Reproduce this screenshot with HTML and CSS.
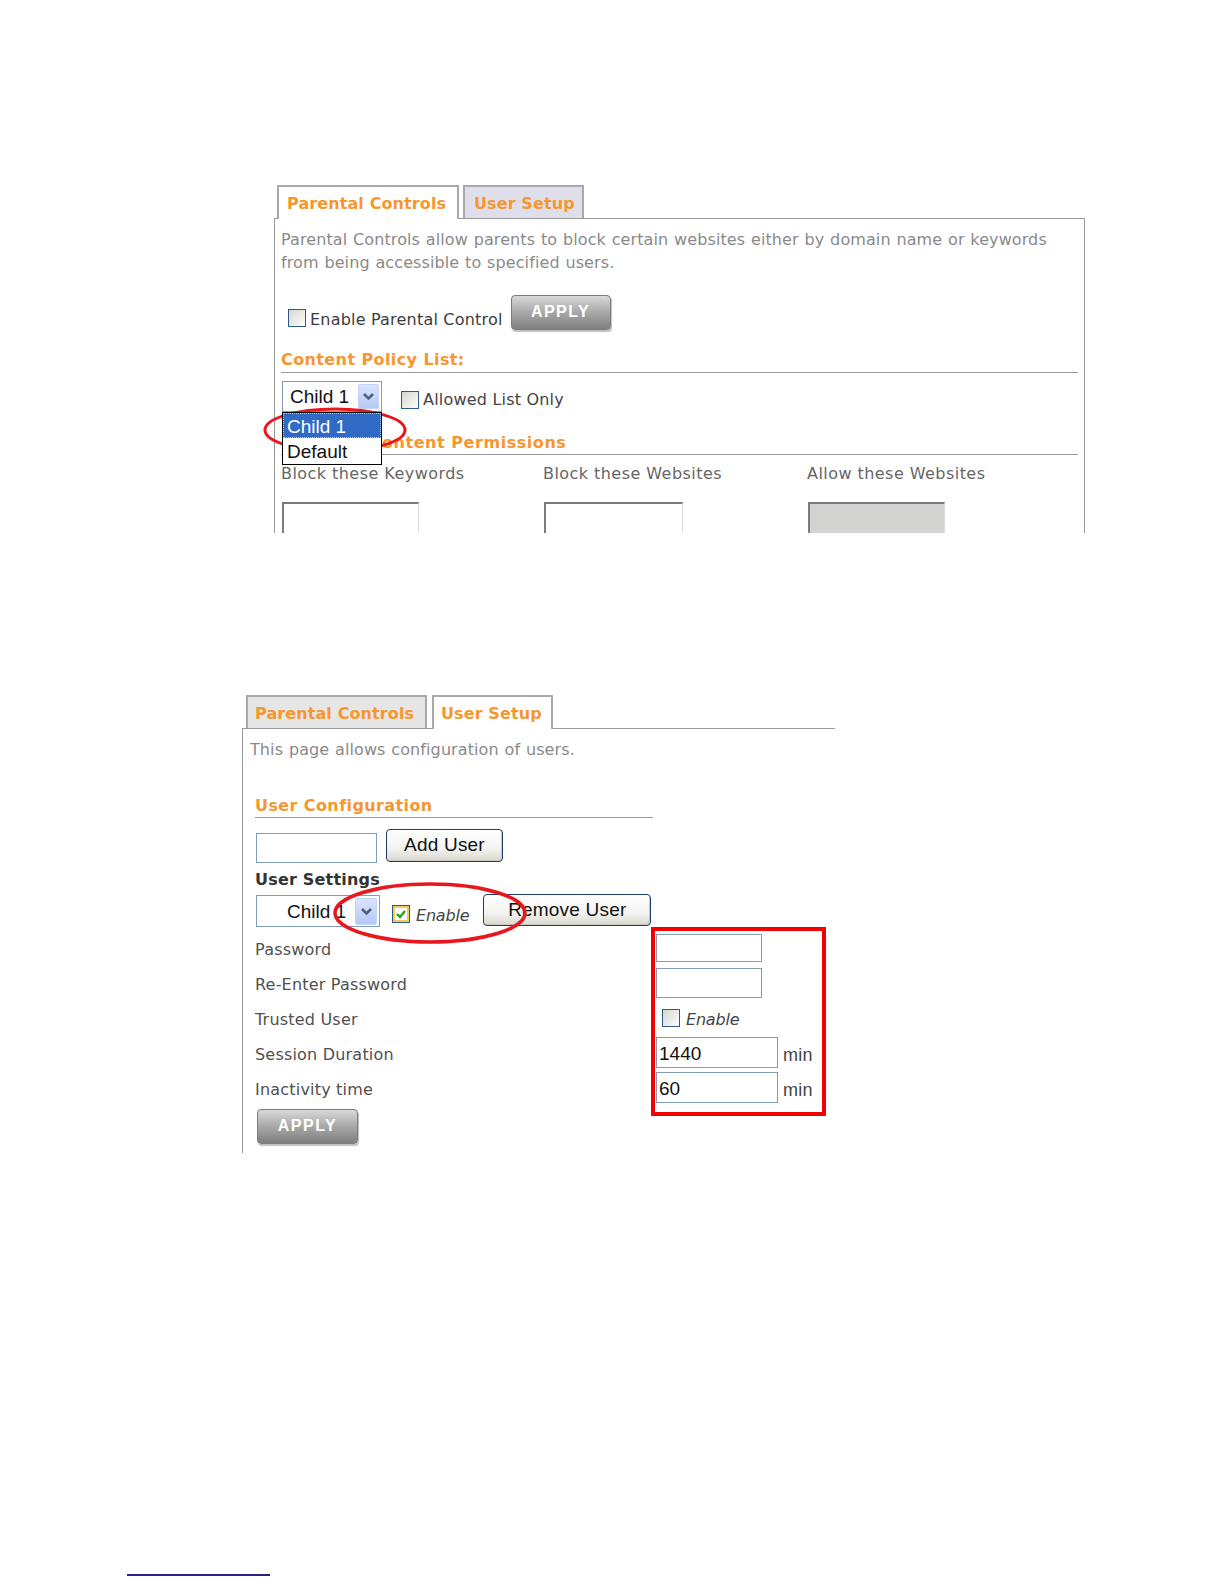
FILE: index.html
```html
<!doctype html>
<html>
<head>
<meta charset="UTF-8">
<title>Parental Controls</title>
<link rel="stylesheet" href="styles.css">
</head>
<body>

<!-- screen 1: parental controls, policy drop-down opened -->
<div class="shot shot-pc">
  <div class="tabs">
    <div class="tab tab-pc active">Parental Controls</div>
    <div class="tab tab-us">User Setup</div>
  </div>
  <div class="panel panel-pc">
    <p class="desc">Parental Controls allow parents to block certain websites either by domain name or keywords<br>from being accessible to specified users.</p>

    <div class="enable-row">
      <span class="check"></span>
      <span class="check-label">Enable Parental Control</span>
      <span class="apply">APPLY</span>
    </div>

    <div class="section-head">Content Policy List:</div>

    <div class="policy-row">
      <div class="select select-pc">
        <span class="select-text">Child 1</span>
        <span class="drop"><svg width="13" height="9" viewBox="0 0 13 9"><polyline points="2,2 6.5,6.5 11,2" fill="none" stroke="#4d6185" stroke-width="2.6"/></svg></span>
        <div class="select-list">
          <div class="opt opt-on">Child 1</div>
          <div class="opt opt-low">Default</div>
        </div>
      </div>
      <span class="check allowed-check"></span>
      <span class="check-label allowed-label">Allowed List Only</span>
    </div>

    <div class="section-head perm-head">Selected Content Permissions</div>

    <div class="cols">
      <div class="col-label">Block these Keywords</div>
      <div class="col-label">Block these Websites</div>
      <div class="col-label">Allow these Websites</div>
      <div class="inset"></div>
      <div class="inset inset-2"></div>
      <div class="inset off"></div>
    </div>
  </div>

  <svg class="mark mark-1" width="148" height="52" viewBox="0 0 148 52"><ellipse cx="73" cy="24" rx="70" ry="21" fill="none" stroke="#e8161d" stroke-width="3"/></svg>
</div>

<!-- screen 2: user setup -->
<div class="shot shot-us">
  <div class="tabs tabs-us">
    <div class="tab tab-pc2">Parental Controls</div>
    <div class="tab tab-us2 active">User Setup</div>
  </div>
  <div class="panel panel-us">
    <p class="desc desc-us">This page allows configuration of users.</p>

    <div class="form">
      <div class="section-head head-short">User Configuration</div>

      <div class="add-row">
        <span class="field field-name"></span>
        <span class="xp-btn add-btn">Add User</span>
      </div>

      <div class="settings-title">User Settings</div>

      <div class="user-row">
        <div class="select select-us">
          <span class="select-text">Child 1</span>
          <span class="drop"><svg width="13" height="9" viewBox="0 0 13 9"><polyline points="2,2 6.5,6.5 11,2" fill="none" stroke="#4d6185" stroke-width="2.6"/></svg></span>
        </div>
        <span class="check checked"><svg width="14" height="14" viewBox="0 0 14 14"><polyline points="3,7 6,10 11,4" fill="none" stroke="#21a121" stroke-width="2.4"/></svg></span>
        <span class="em-label">Enable</span>
        <span class="xp-btn remove-btn">Remove User</span>
      </div>

      <div class="grid">
        <span class="row-label">Password</span>
        <span class="field field-pw"></span>
        <span class="row-label">Re-Enter Password</span>
        <span class="field field-pw2"></span>
        <span class="row-label">Trusted User</span>
        <span class="trust"><span class="check"></span><span class="em-label">Enable</span></span>
        <span class="row-label">Session Duration</span>
        <span class="with-unit"><span class="field field-num">1440</span><span class="unit">min</span></span>
        <span class="row-label">Inactivity time</span>
        <span class="with-unit"><span class="field field-num">60</span><span class="unit">min</span></span>
      </div>

      <span class="apply apply-us">APPLY</span>
    </div>
  </div>

  <svg class="mark mark-2" width="200" height="66" viewBox="0 0 200 66"><ellipse cx="99" cy="32" rx="95" ry="29" fill="none" stroke="#e8161d" stroke-width="3.5"/></svg>
  <div class="mark mark-box"></div>
</div>

<div class="footnote-rule"></div>

</body>
</html>
```

FILE: styles.css
```css
body { margin: 0; background: #fff; font-family: "DejaVu Sans", sans-serif; font-size: 16px; color: #555; letter-spacing: 0.2px; }

.shot { position: relative; }
.shot-pc { margin: 185px 0 0 274px; width: 811px; }
.shot-us { margin: 162px 0 0 242px; width: 594px; }

/* tabs */
.tabs { display: flex; gap: 4px; height: 33px; padding-left: 3px; align-items: flex-start; }
.tabs-us { padding-left: 4px; gap: 5px; }
.tab { box-sizing: border-box; height: 33px; border: 2px solid #a9a9a9; border-bottom: 0; line-height: 33px; font-weight: bold; color: #f7962f; white-space: nowrap; letter-spacing: 0.1px; }
.tab.active { position: relative; height: 34px; background: #fff; }
.tab-pc { width: 182px; padding-left: 8px; }
.tab-us { width: 121px; padding-left: 9px; background: #dfdfeb; }
.tab-pc2 { width: 181px; padding-left: 7px; background: #e6e6e6; }
.tab-us2 { width: 121px; padding-left: 7px; }

/* panels */
.panel { box-sizing: border-box; border-top: 1px solid #999; border-left: 1px solid #999; }
.panel-pc { height: 315px; border-right: 1px solid #999; padding: 0 6px; overflow: hidden; }
.panel-us { height: 425px; width: 593px; padding-left: 7px; }

.desc { margin: 0; padding-top: 9px; line-height: 23px; color: #8a8a8a; white-space: nowrap; letter-spacing: 0.1px; word-spacing: 0.6px; }
.desc-us { padding-top: 11px; line-height: 20px; }

.section-head { line-height: 20px; padding-bottom: 2px; border-bottom: 1px solid #999; color: #f7962f; font-weight: bold; margin-top: 20px; white-space: nowrap; letter-spacing: 0.4px; }

/* checkboxes */
.check { box-sizing: border-box; display: inline-block; width: 18px; height: 18px; border: 1px solid #2c5a8a; background: linear-gradient(135deg, #d8d8d2, #fbfbf9); flex: none; }
.check.checked { background: #fff; box-shadow: inset 0 0 0 2px #f4c95c; display: flex; align-items: center; justify-content: center; }
.check-label { line-height: 20px; color: #3c3c3c; white-space: nowrap; }

/* gray apply button */
.apply { box-sizing: border-box; display: inline-block; width: 100px; height: 35px; border: 1px solid #7b7b7b; border-radius: 4px; background: linear-gradient(#d9d9d9, #a3a3a3 55%, #7f7f7f); box-shadow: 1px 2px 1px rgba(0, 0, 0, 0.25); color: #fff; font-family: "Liberation Sans", sans-serif; font-weight: bold; font-size: 16px; letter-spacing: 1.5px; text-align: center; line-height: 31px; }

.enable-row { display: flex; align-items: flex-start; margin-top: 21px; height: 35px; padding-left: 7px; }
.enable-row .check { margin-top: 14px; }
.enable-row .check-label { margin: 15px 0 0 4px; }
.enable-row .apply { margin-left: 8px; }

/* drop-down selects */
.select { box-sizing: border-box; position: relative; display: flex; align-items: center; border: 1px solid #7f9db9; background: #fff; font-family: "Liberation Sans", sans-serif; font-size: 19px; color: #111; flex: none; letter-spacing: 0; }
.select-text { flex: 1; white-space: nowrap; padding-top: 1px; }
.drop { box-sizing: border-box; display: flex; align-items: center; justify-content: center; width: 21px; height: 25px; margin-right: 2px; border: 1px solid #c4d3f7; border-radius: 2px; background: linear-gradient(#dae5fd, #b4c8f6); }
.select-pc { width: 100px; height: 31px; margin-left: 1px; padding-left: 7px; }
.select-us { width: 124px; height: 32px; margin-left: 1px; padding-left: 30px; }
.select-us .drop { height: 27px; width: 22px; }

.select-list { box-sizing: border-box; position: absolute; left: -1px; top: 30px; width: 100px; height: 53px; border: 1px solid #000; background: #fff; overflow: hidden; z-index: 2; }
.opt { height: 25px; line-height: 27px; padding-left: 4px; white-space: nowrap; }
.opt-on { background: #316ac5; color: #fff; outline: 1px dotted #e4cc7a; outline-offset: -1px; }

.policy-row { display: flex; align-items: flex-start; margin-top: 8px; height: 31px; }
.allowed-check { margin: 10px 0 0 19px; }
.allowed-label { margin: 9px 0 0 4px; color: #444; }

.perm-head { margin-top: 21px; padding-bottom: 1px; letter-spacing: 0.55px; }

/* three columns */
.cols { display: grid; grid-template-columns: 262px 264px 1fr; margin-top: 9px; }
.col-label { line-height: 20px; color: #666; white-space: nowrap; letter-spacing: 0.45px; }
.inset { box-sizing: border-box; width: 137px; height: 32px; margin: 18px 0 0 1px; border-style: solid; border-width: 2px 1px 1px 2px; border-color: #7c7c7c #dcdcdc #dcdcdc #7c7c7c; background: #fff; }
.inset-2 { width: 139px; }
.inset.off { background: #d3d3d1; }

/* user setup form */
.form { margin-left: 5px; }
.head-short { width: 398px; margin-top: 36px; padding-bottom: 1px; }

.field { box-sizing: border-box; display: inline-block; border: 1px solid #7f9db9; background: #fff; font-family: "Liberation Sans", sans-serif; font-size: 19px; color: #111; padding-left: 2px; flex: none; letter-spacing: 0; }
.field-name { width: 121px; height: 30px; margin: 4px 0 0 1px; }

.xp-btn { box-sizing: border-box; display: inline-block; height: 33px; border: 1px solid #1e3f6e; border-radius: 4px; background: linear-gradient(#ffffff, #f3f3ef 60%, #d9d8d0); box-shadow: inset -1px -1px 0 #c9c7bb; font-family: "Liberation Sans", sans-serif; font-size: 19px; color: #111; text-align: center; line-height: 30px; flex: none; letter-spacing: 0.2px; }
.add-btn { width: 117px; margin-left: 9px; }
.remove-btn { width: 168px; height: 32px; margin: -1px 0 0 14px; }

.add-row { display: flex; align-items: flex-start; margin-top: 11px; height: 34px; }
.settings-title { margin-top: 6px; padding-top: 1px; line-height: 20px; font-weight: bold; color: #333; }

.user-row { display: flex; align-items: flex-start; margin-top: 5px; height: 32px; }
.user-row .check { margin: 10px 0 0 12px; }
.em-label { font-style: italic; color: #444; line-height: 20px; white-space: nowrap; letter-spacing: -0.2px; }
.user-row .em-label { margin: 11px 0 0 6px; }

.grid { display: grid; grid-template-columns: 401px auto; grid-auto-rows: 35px; align-items: center; margin-top: 3px; }
.row-label { color: #505050; white-space: nowrap; padding-top: 4px; }
.field-pw { width: 106px; height: 28px; }
.field-pw2 { width: 106px; height: 30px; }
.trust { display: flex; align-items: center; padding-left: 6px; }
.trust .em-label { margin-left: 6px; padding-top: 4px; }
.with-unit { display: flex; align-items: center; }
.field-num { width: 122px; height: 31px; padding-top: 3px; line-height: 26px; }
.unit { margin-left: 5px; padding-top: 5px; font-family: "Liberation Sans", sans-serif; font-size: 18px; color: #444; }

.apply-us { display: block; width: 101px; margin: 4px 0 0 2px; }

/* red annotations */
.mark { position: absolute; pointer-events: none; }
.mark-1 { left: -12px; top: 221px; }
.mark-2 { left: 89px; top: 186px; }
.mark-box { box-sizing: border-box; left: 409px; top: 232px; width: 175px; height: 189px; border: 4px solid #f50000; }

.footnote-rule { margin: 421px 0 0 127px; width: 143px; border-top: 2px solid #23238c; }
```
